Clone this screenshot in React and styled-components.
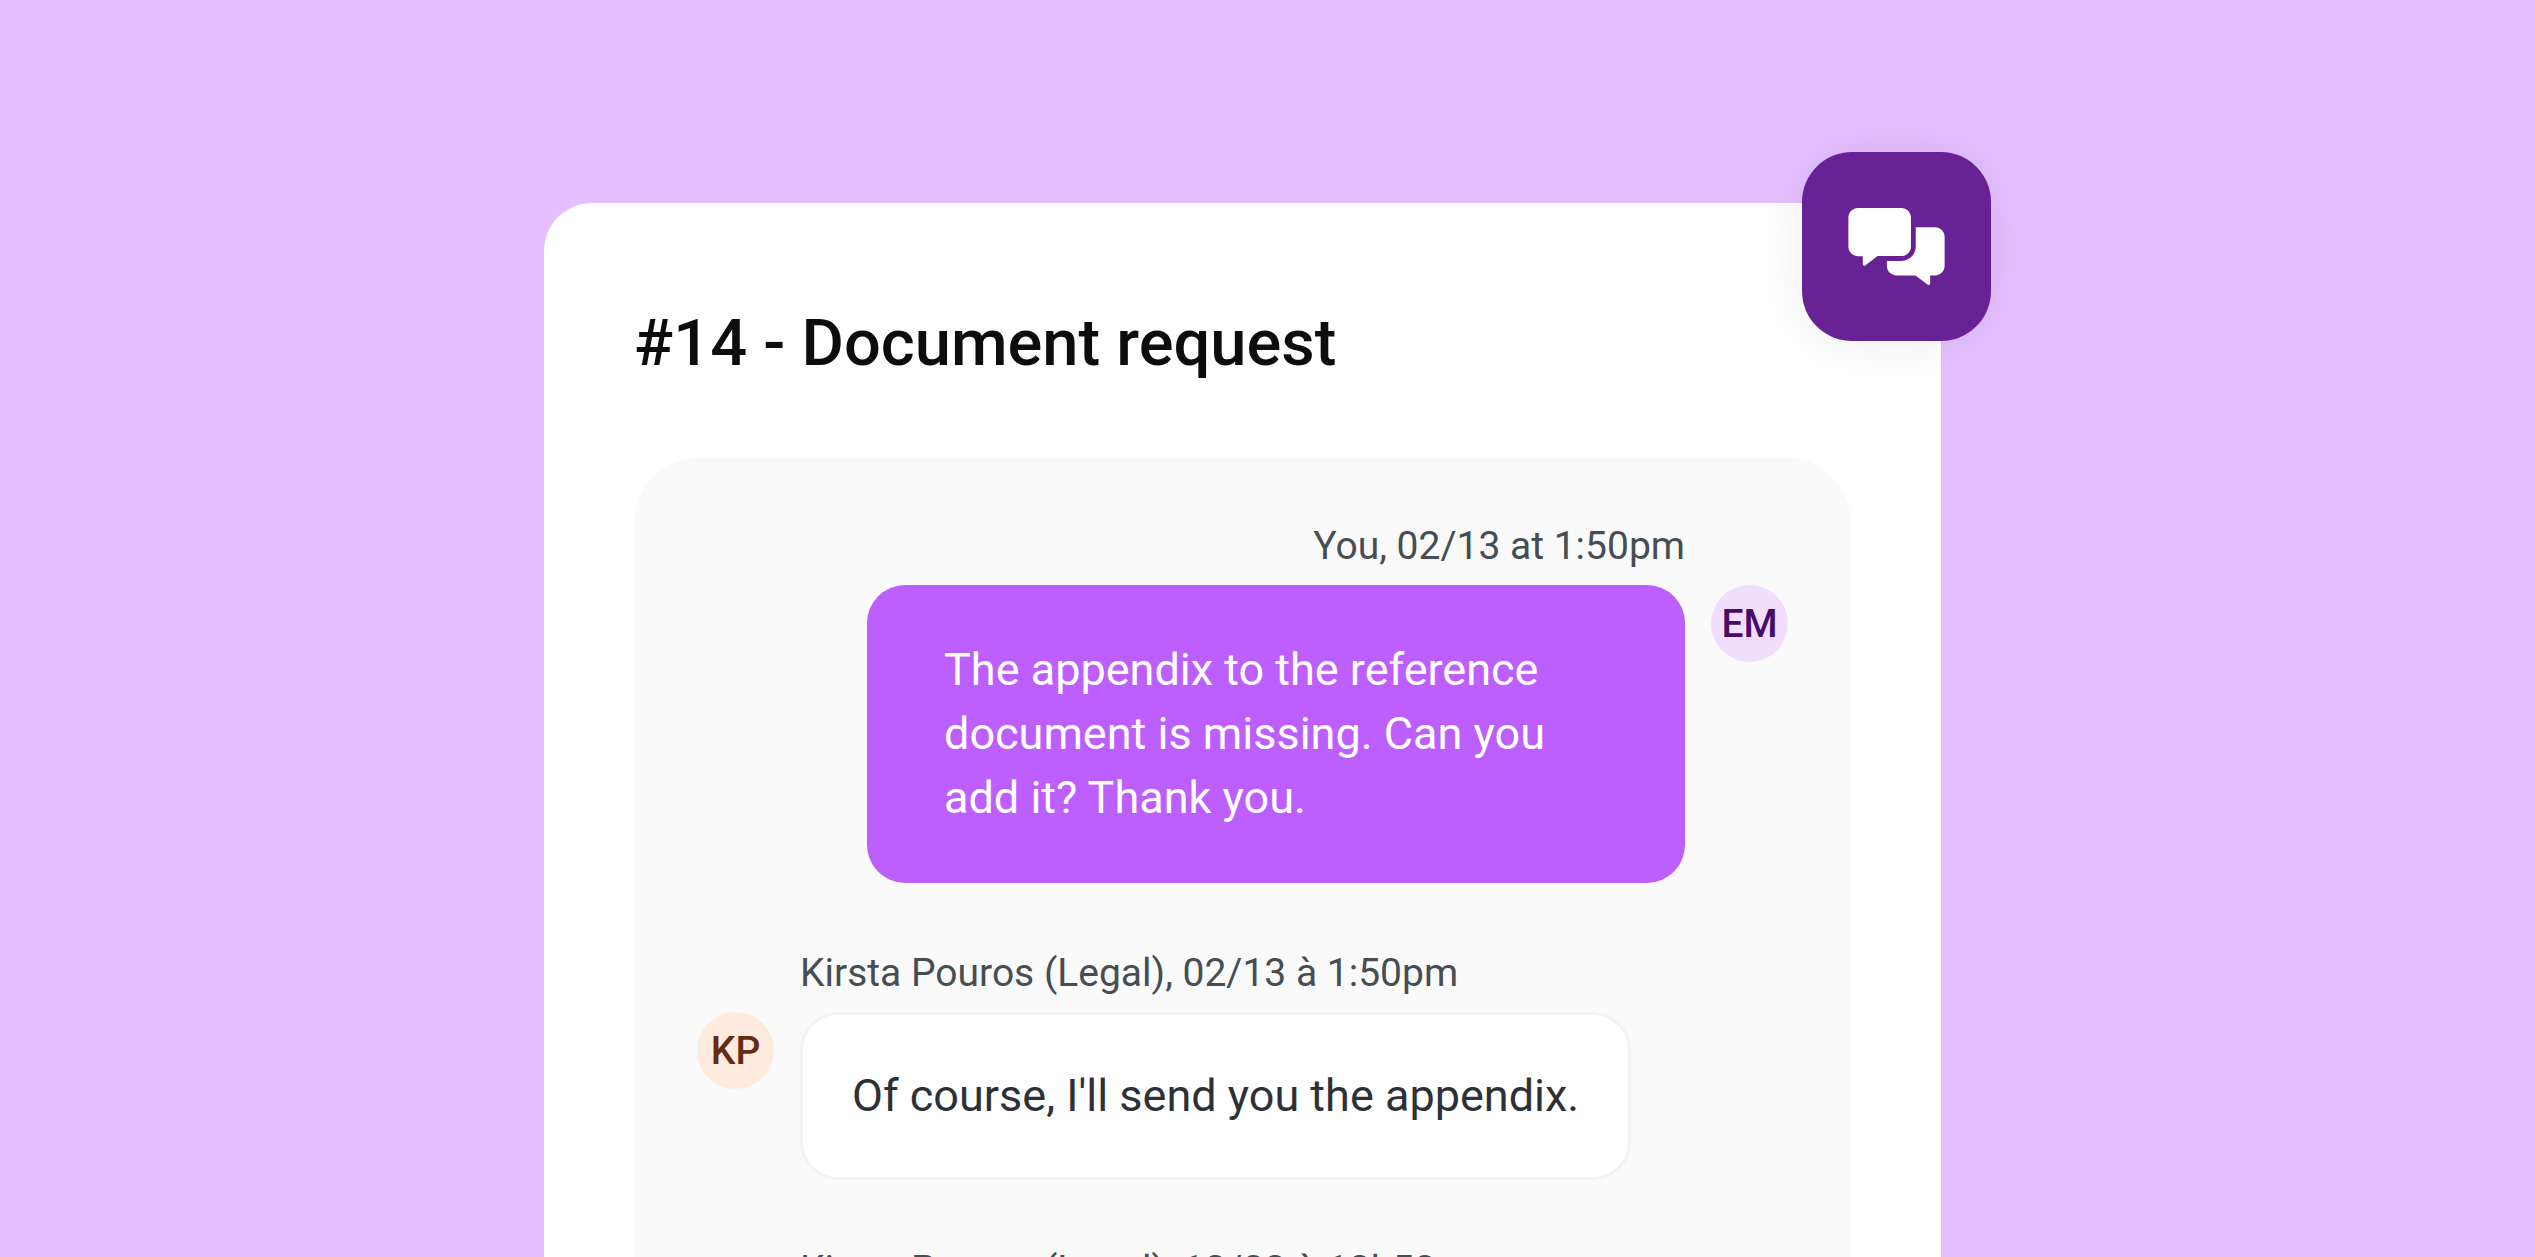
import React from "react";
import styled, { createGlobalStyle } from "styled-components";

const GlobalStyle = createGlobalStyle`
  *, *::before, *::after { box-sizing: border-box; }
  body {
    margin: 0;
    font-family: Roboto, "Liberation Sans", sans-serif;
    background: #e5bfff;
  }
`;

const Scene = styled.main`
  height: 100vh;
  padding-top: 203px;
  display: flex;
  justify-content: center;
  overflow: hidden;
  background: #e5bfff;
`;

const Card = styled.section`
  position: relative;
  flex: 0 1 1397px;
  margin-right: 50px;
  padding: 90px 90px 0;
  display: flex;
  flex-direction: column;
  gap: 64px;
  min-height: max-content;
  border-radius: 48px 48px 0 0;
  background: #fff;
`;

const Title = styled.h1`
  margin: 0;
  font-size: 65px;
  line-height: 100px;
  font-weight: 500;
  color: #0b0d0e;
`;

const AppBadge = styled.div`
  position: absolute;
  top: -51px;
  right: -50px;
  width: 189px;
  height: 189px;
  display: grid;
  place-items: center;
  border-radius: 50px;
  background: #672296;
  box-shadow: 0 0 52px rgba(0, 0, 0, 0.07);
`;

const Thread = styled.ol`
  flex: 1;
  margin: 0;
  padding: 65px 63px;
  list-style: none;
  display: flex;
  flex-direction: column;
  gap: 66px;
  border-radius: 66px 66px 0 0;
  background: #fafafa;
`;

const Message = styled.li`
  display: flex;
  flex-direction: ${(p) => (p.$own ? "row-reverse" : "row")};
  align-items: flex-start;
  gap: 26px;
`;

const Avatar = styled.span`
  flex: none;
  width: 77px;
  height: 77px;
  margin-top: 63px;
  display: grid;
  place-items: center;
  border-radius: 50%;
  font-size: 39px;
  line-height: 48px;
  font-weight: 500;
  color: ${(p) => (p.$own ? "#460c66" : "#662c12")};
  background: ${(p) => (p.$own ? "#f1deff" : "#ffeadf")};
`;

const Content = styled.div`
  display: flex;
  flex-direction: column;
  align-items: ${(p) => (p.$own ? "flex-end" : "flex-start")};
  gap: 15px;
`;

const Meta = styled.span`
  font-size: 39px;
  line-height: 48px;
  color: #464d53;
`;

const Bubble = styled.p`
  margin: 0;
  max-width: 832px;
  border-radius: 38px;
  font-size: 45px;
  line-height: 64px;
  ${(p) =>
    p.$own
      ? `width: 818px; padding: 53px 77px; color: #fff; background: #bd5fff;`
      : `padding: 49px; border: 3px solid #f1f3f4; color: #2d3136; background: #fff;`}
`;

const messages = [
  {
    initials: "EM",
    own: true,
    meta: "You, 02/13 at 1:50pm",
    text: "The appendix to the reference document is missing. Can you add it? Thank you.",
  },
  {
    initials: "KP",
    meta: "Kirsta Pouros (Legal), 02/13 à 1:50pm",
    text: "Of course, I'll send you the appendix.",
  },
  { meta: "Kirsta Pouros (Legal), 13/02 à 13h50", initials: "KP" },
];

function MessagesIcon() {
  return (
    <svg width="97" height="77" viewBox="0 0 640 512" fill="#fff" aria-hidden="true">
      <path d="M416 256V64c0-35.3-28.700-64-64-64H64C28.700 0 0 28.700 0 64v192c0 35.300 28.700 64 64 64h32v54.300c0 8 9.100 12.600 15.500 7.800l82.800-62.100H352c35.300 0 64-28.700 64-64z" />
      <path d="M576 128H448v128c0 52.900-43.100 96-96 96h-96v32c0 35.300 28.700 64 64 64h125.700l82.800 62.100c6.400 4.800 15.500.2 15.500-7.800V448h32c35.300 0 64-28.700 64-64V192c0-35.300-28.700-64-64-64z" />
    </svg>
  );
}

export default function App() {
  return (
    <>
      <GlobalStyle />
      <Scene>
        <Card>
          <Title>#14 - Document request</Title>
          <Thread>
            {messages.map((m) => (
              <Message key={m.meta} $own={m.own}>
                <Avatar $own={m.own}>{m.initials}</Avatar>
                <Content $own={m.own}>
                  <Meta>{m.meta}</Meta>
                  {m.text && <Bubble $own={m.own}>{m.text}</Bubble>}
                </Content>
              </Message>
            ))}
          </Thread>
          <AppBadge>
            <MessagesIcon />
          </AppBadge>
        </Card>
      </Scene>
    </>
  );
}
